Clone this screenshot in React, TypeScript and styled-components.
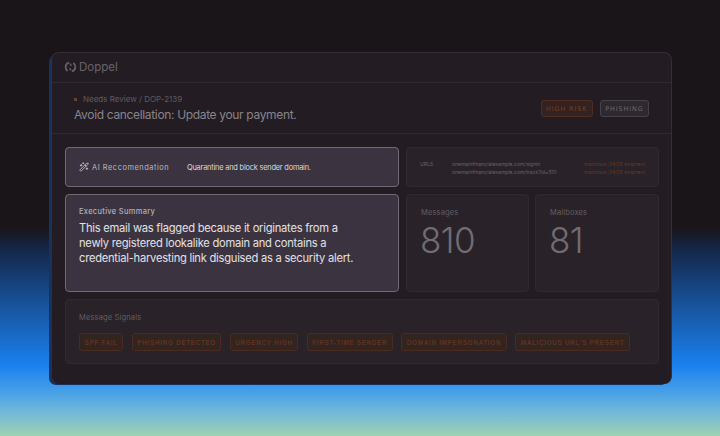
import styled, { createGlobalStyle } from 'styled-components'
import { WandSparkles } from 'lucide-react'

const GlobalStyle = createGlobalStyle`
  html, body {
    margin: 0;
    padding: 0;
    background: #1a1519;
  }
  * {
    box-sizing: border-box;
  }
`;

const Page = styled.div`
  width: 720px;
  height: 436px;
  overflow: hidden;
  padding: 52px 48px 0 51px;
  font-family: Inter, "Liberation Sans", sans-serif;
  background: linear-gradient(
    180deg,
    #1a1519 0,
    #1a1519 228px,
    #14284a 250px,
    #174f95 300px,
    #1a80ee 365px,
    #47a0e8 392px,
    #72b8d8 412px,
    #9cd3b0 436px
  );
`;

const Window = styled.div`
  width: 621px;
  height: 332px;
  display: flex;
  flex-direction: column;
  background: #231d23;
  border: 1px solid #332d34;
  border-bottom: 0;
  border-radius: 8px;
  box-shadow: -3px 2px 0 -1px #17335c;
`;

const TopBar = styled.div`
  height: 30px;
  display: flex;
  align-items: center;
  gap: 2px;
  padding: 0 12px 2px 12px;
  border-bottom: 1px solid #2f2930;
  color: #67626a;
  font-size: 11.5px;
`;

const TitleBar = styled.div`
  height: 51px;
  display: flex;
  align-items: center;
  justify-content: space-between;
  padding: 0 22px 0 22px;
  border-bottom: 1px solid #2f2930;
`;

const TitleBlock = styled.div`
  display: flex;
  flex-direction: column;
  gap: 3px;
`;

const Crumb = styled.div`
  display: flex;
  align-items: center;
  gap: 6px;
  font-size: 8px;
  color: #5f5a62;
`;

const CrumbDot = styled.span`
  width: 3px;
  height: 3px;
  background: #6b4030;
`;

const Title = styled.div`
  font-size: 12px;
  letter-spacing: -0.34px;
  color: #88838a;
`;

const BadgeRow = styled.div`
  display: flex;
  gap: 7px;
  margin-top: 1px;
`;

const Tag = styled.span<{ $tone: 'risk' | 'plain' }>`
  display: inline-flex;
  align-items: center;
  height: 17px;
  padding: 0 4.5px;
  font-family: "DejaVu Sans", sans-serif;
  font-size: 6.4px;
  letter-spacing: 0.9px;
  white-space: nowrap;
  border-radius: 3px;
  color: ${(p) => (p.$tone === 'risk' ? '#7a3f28' : '#6d686f')};
  background: ${(p) => (p.$tone === 'risk' ? '#33221f' : '#2e292f')};
  border: 1px solid ${(p) => (p.$tone === 'risk' ? '#4f2c20' : '#47424a')};
`;

const Content = styled.div`
  flex: 1;
  display: grid;
  grid-template-columns: 334px 253px;
  grid-template-rows: 40px 98px 65px;
  gap: 7px;
  padding: 13px 13px 0 13px;
`;

const Highlight = styled.div`
  background: #3b3440;
  border: 1px solid #6f6a76;
  border-radius: 4px;
`;

const RecCard = styled(Highlight)`
  display: flex;
  align-items: center;
  padding: 0 13px;
  font-size: 7.4px;
`;

const RecLabel = styled.span`
  width: 108px;
  display: flex;
  align-items: center;
  gap: 3px;
  color: #bdb9c0;
  letter-spacing: 0.55px;
`;

const RecText = styled.span`
  color: #dcd9de;
  letter-spacing: -0.2px;
`;

const Panel = styled.div`
  background: #292329;
  border: 1px solid #2f2930;
  border-radius: 4px;
`;

const UrlPanel = styled(Panel)`
  display: grid;
  grid-template-columns: 32px 1fr auto;
  align-content: start;
  padding: 12px 13px 0 13px;
  font-size: 5.05px;
  line-height: 8px;
  color: #66616a;
`;

const UrlRed = styled.span`
  color: #663826;
`;

const SummaryCard = styled(Highlight)`
  padding: 12px 13px 0 13px;
`;

const SummaryLabel = styled.div`
  font-size: 7.5px;
  font-weight: 500;
  letter-spacing: 0.3px;
  color: #b3afb7;
  margin-bottom: 5px;
`;

const SummaryText = styled.div`
  font-size: 11.2px;
  line-height: 15px;
  color: #e2e0e4;
  letter-spacing: -0.26px;
`;

const StatPair = styled.div`
  display: grid;
  grid-template-columns: 123px 124px;
  gap: 6px;
`;

const StatCard = styled(Panel)`
  padding: 13px 13px 0 14px;
`;

const StatLabel = styled.div`
  font-size: 7.5px;
  letter-spacing: 0.15px;
  color: #625d65;
`;

const StatValue = styled.div`
  font-size: 35px;
  line-height: 38px;
  color: #716c74;
  font-weight: 300;
  letter-spacing: -0.6px;
  margin-top: 4px;
  margin-left: -1px;
`;

const SignalPanel = styled(Panel)`
  grid-column: 1 / 3;
  padding: 13px 13px 0 13px;
`;

const SignalTitle = styled.div`
  font-size: 7.5px;
  letter-spacing: 0.15px;
  color: #625d65;
  margin-bottom: 11px;
`;

const SignalRow = styled.div`
  display: flex;
  gap: 8.5px;
`;

const SignalTag = styled.span`
  display: inline-flex;
  align-items: center;
  height: 18px;
  padding: 0 4.5px;
  font-family: "Liberation Sans", sans-serif;
  font-weight: 700;
  font-size: 6.4px;
  letter-spacing: 0.66px;
  white-space: nowrap;
  color: #5f3225;
  background: #32241f;
  border: 1px solid #4b2a20;
  border-radius: 3px;
`;

const signals = [
  'SPF FAIL',
  'PHISHING DETECTED',
  'URGENCY HIGH',
  'FIRST-TIME SENDER',
  'DOMAIN IMPERSONATION',
  "MALICIOUS URL'S PRESENT",
];

function Logo() {
  return (
    <svg width="13" height="12" viewBox="0 0 13 12" fill="none" stroke="#67626a" strokeWidth="1.7">
      <path d="M5 1.6 C2.6 2.4 1.6 4 1.6 6 C1.6 7.6 2.4 9 3.6 10" />
      <path d="M8 10.4 C10.4 9.6 11.4 8 11.4 6 C11.4 4.4 10.6 3 9.4 2" />
      <path d="M6 2.5 L7.4 5" strokeWidth="1.3" />
      <path d="M7 9.5 L5.6 7" strokeWidth="1.3" />
    </svg>
  );
}

export default function App(): JSX.Element {
  return (
    <Page>
      <GlobalStyle />
      <Window>
        <TopBar>
          <Logo />
          Doppel
        </TopBar>
        <TitleBar>
          <TitleBlock>
            <Crumb>
              <CrumbDot />
              Needs Review / DOP-2139
            </Crumb>
            <Title>Avoid cancellation: Update your payment.</Title>
          </TitleBlock>
          <BadgeRow>
            <Tag $tone="risk">HIGH RISK</Tag>
            <Tag $tone="plain">PHISHING</Tag>
          </BadgeRow>
        </TitleBar>
        <Content>
          <RecCard>
            <RecLabel>
              <WandSparkles size={10} color="#c9c5cc" />
              AI Reccomendation
            </RecLabel>
            <RecText>Quarantine and block sender domain.</RecText>
          </RecCard>
          <UrlPanel>
            <span>URLS</span>
            <span>onemainfinancialexample.com/signin</span>
            <UrlRed>malicious (14/72 engines)</UrlRed>
            <span />
            <span>onemainfinancialexample.com/track?id=910</span>
            <UrlRed>malicious (14/72 engines)</UrlRed>
          </UrlPanel>
          <SummaryCard>
            <SummaryLabel>Executive Summary</SummaryLabel>
            <SummaryText>
              This email was flagged because it originates from a
              <br />
              newly registered lookalike domain and contains a
              <br />
              credential-harvesting link disguised as a security alert.
            </SummaryText>
          </SummaryCard>
          <StatPair>
            <StatCard>
              <StatLabel>Messages</StatLabel>
              <StatValue>810</StatValue>
            </StatCard>
            <StatCard>
              <StatLabel>Mailboxes</StatLabel>
              <StatValue>81</StatValue>
            </StatCard>
          </StatPair>
          <SignalPanel>
            <SignalTitle>Message Signals</SignalTitle>
            <SignalRow>
              {signals.map((s) => (
                <SignalTag key={s}>{s}</SignalTag>
              ))}
            </SignalRow>
          </SignalPanel>
        </Content>
      </Window>
    </Page>
  );
}
